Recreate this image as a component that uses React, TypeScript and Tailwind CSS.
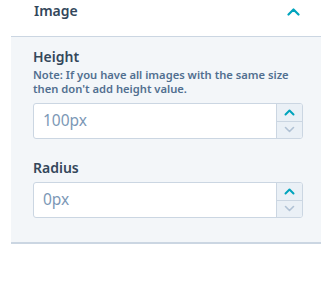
import React from "react";

function Stepper() {
  return (
    <div className="flex w-[26px] flex-col border-l border-[#cbd6e2] bg-[#eaf0f6]">
      <button className="flex flex-1 items-center justify-center border-b border-[#cbd6e2]">
        <svg width="11" height="7" viewBox="0 0 11 7" fill="none">
          <path d="M1.5 5.5 L5.5 1.5 L9.5 5.5" stroke="#00a4bd" strokeWidth="2" strokeLinecap="round" strokeLinejoin="round" />
        </svg>
      </button>
      <button className="flex flex-1 items-center justify-center">
        <svg width="11" height="7" viewBox="0 0 11 7" fill="none">
          <path d="M1.5 1.5 L5.5 5.5 L9.5 1.5" stroke="#b0c1d4" strokeWidth="1.6" strokeLinecap="round" strokeLinejoin="round" />
        </svg>
      </button>
    </div>
  );
}

function NumberField({ placeholder }: { placeholder: string }) {
  return (
    <div className="flex h-[36px] w-[270px] overflow-hidden rounded-[3px] border border-[#cbd6e2] bg-white">
      <div className="flex flex-1 items-center pl-[9px] text-[15.5px] text-[#7c98b6]">{placeholder}</div>
      <Stepper />
    </div>
  );
}

export default function App() {
  const font = { fontFamily: '"Noto Sans", "Open Sans", sans-serif' };
  return (
    <div className="h-[303px] w-[321px] bg-white" style={font}>
      <div className="ml-[11px]">
        <div className="flex h-[37px] items-start justify-between border-b border-[#cbd6e2] pl-[23px] pr-[21px] pt-[1px]">
          <span className="text-[14px] font-semibold leading-[20px] text-[#33475b]">Image</span>
          <svg className="mt-[7px]" width="13" height="8" viewBox="0 0 13 8" fill="none">
            <path d="M1.5 6.5 L6.5 1.5 L11.5 6.5" stroke="#00a4bd" strokeWidth="2.2" strokeLinecap="round" strokeLinejoin="round" />
          </svg>
        </div>
        <div className="border-b-2 border-[#cbd6e2] bg-[#f3f6f9] pb-[24px] pl-[22px] pt-[10px]">
          <div className="text-[14px] font-semibold leading-[20px] text-[#33475b]">Height</div>
          <div className="mt-[1px] text-[11.2px] font-semibold leading-[14px] text-[#516f90]">
            Note: If you have all images with the same size
            <br />
            then don't add height value.
          </div>
          <div className="mt-[7px]">
            <NumberField placeholder="100px" />
          </div>
          <div className="mt-[19px] text-[14px] font-semibold leading-[20px] text-[#33475b]">Radius</div>
          <div className="mt-[4px]">
            <NumberField placeholder="0px" />
          </div>
        </div>
      </div>
    </div>
  );
}
